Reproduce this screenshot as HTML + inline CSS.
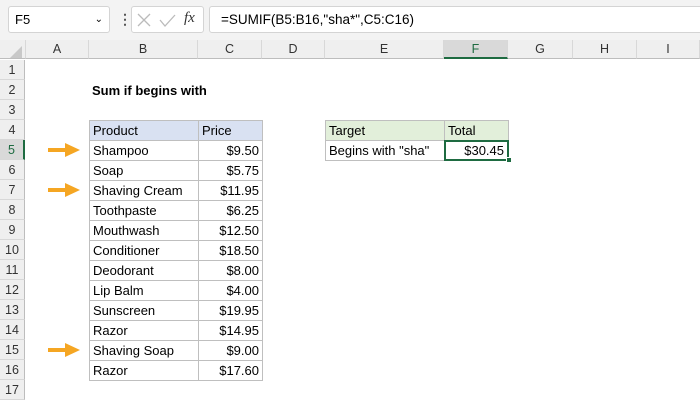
<!DOCTYPE html>
<html><head><style>
*{margin:0;padding:0;box-sizing:border-box}
body{width:700px;height:400px;overflow:hidden;background:#fff;font-family:"Liberation Sans",sans-serif;position:relative;color:#000}
.a{position:absolute}
.ch{position:absolute;top:40px;height:19px;background:#efefef;border-right:1px solid #d8d8d8;border-bottom:1px solid #bdbdbd;font-size:12.5px;color:#333;text-align:center;line-height:19px}
.rh{position:absolute;left:0;width:25px;height:20px;background:#efefef;border-bottom:1px solid #d8d8d8;border-right:1px solid #bdbdbd;font-size:12.5px;color:#333;text-align:center;line-height:20px}
.c{position:absolute;height:21px;border:1px solid #bfbfbf;font-size:13px;line-height:19px;padding:0 3px;white-space:nowrap}
.r{text-align:right}
.arr{position:absolute;left:48px;width:32px;height:16px}
</style></head><body>
<div class="a" style="left:0;top:0;width:700px;height:40px;background:#f3f3f3"></div>
<div class="a" style="left:8px;top:6px;width:102px;height:27px;background:#fff;border:1px solid #d4d4d4;border-radius:3px;font-size:13px;line-height:25px;padding-left:6px">F5<span style="position:absolute;right:6px;top:0;font-size:10px">&#8964;</span></div>
<div class="a" style="left:118px;top:12px;font-size:14px;line-height:14px;color:#555;font-weight:bold">&#8942;</div>
<div class="a" style="left:131px;top:6px;width:73px;height:27px;background:#fff;border:1px solid #d4d4d4;border-radius:3px">
<svg width="73" height="27" style="position:absolute;left:0;top:0"><path d="M6 7l12 12M18 7L6 19" stroke="#bbb" stroke-width="1.3" fill="none"/><path d="M28 13l5 6 10-11" stroke="#bbb" stroke-width="1.3" fill="none"/></svg>
<span style="position:absolute;left:52px;top:3px;font-family:'Liberation Serif',serif;font-style:italic;font-size:15px;color:#333">fx</span></div>
<div class="a" style="left:209px;top:6px;width:495px;height:27px;background:#fff;border:1px solid #d4d4d4;border-radius:3px;font-size:13.5px;line-height:25px;padding-left:11px">=SUMIF(B5:B16,"sha*",C5:C16)</div>

<div class="ch" style="left:0;width:26px"></div>
<svg class="a" style="left:8px;top:46px" width="14" height="12"><path d="M14 0V12H2Z" fill="#c8c8c8"/></svg>
<div class="ch" style="left:26px;width:63px">A</div>
<div class="ch" style="left:89px;width:109px">B</div>
<div class="ch" style="left:198px;width:64px">C</div>
<div class="ch" style="left:262px;width:63px">D</div>
<div class="ch" style="left:325px;width:119px">E</div>
<div class="ch" style="left:444px;width:64px;background:#d9d9d9;color:#1e6b41;border-bottom:2px solid #1e6b41">F</div>
<div class="ch" style="left:508px;width:65px">G</div>
<div class="ch" style="left:573px;width:64px">H</div>
<div class="ch" style="left:637px;width:63px">I</div>

<div class="rh" style="top:60px">1</div>
<div class="rh" style="top:80px">2</div>
<div class="rh" style="top:100px">3</div>
<div class="rh" style="top:120px">4</div>
<div class="rh" style="top:140px;background:#d9d9d9;color:#1e6b41;border-right:2px solid #1e6b41">5</div>
<div class="rh" style="top:160px">6</div>
<div class="rh" style="top:180px">7</div>
<div class="rh" style="top:200px">8</div>
<div class="rh" style="top:220px">9</div>
<div class="rh" style="top:240px">10</div>
<div class="rh" style="top:260px">11</div>
<div class="rh" style="top:280px">12</div>
<div class="rh" style="top:300px">13</div>
<div class="rh" style="top:320px">14</div>
<div class="rh" style="top:340px">15</div>
<div class="rh" style="top:360px">16</div>
<div class="rh" style="top:380px">17</div>

<div class="a" style="left:92px;top:82px;font-size:13px;font-weight:bold;line-height:18px">Sum if begins with</div>

<div class="c" style="left:89px;top:120px;width:110px;background:#d9e1f2">Product</div>
<div class="c r" style="left:198px;top:120px;width:65px;background:#d9e1f2;text-align:left">Price</div>
<div class="c" style="left:89px;top:140px;width:110px">Shampoo</div><div class="c r" style="left:198px;top:140px;width:65px">$9.50</div>
<div class="c" style="left:89px;top:160px;width:110px">Soap</div><div class="c r" style="left:198px;top:160px;width:65px">$5.75</div>
<div class="c" style="left:89px;top:180px;width:110px">Shaving Cream</div><div class="c r" style="left:198px;top:180px;width:65px">$11.95</div>
<div class="c" style="left:89px;top:200px;width:110px">Toothpaste</div><div class="c r" style="left:198px;top:200px;width:65px">$6.25</div>
<div class="c" style="left:89px;top:220px;width:110px">Mouthwash</div><div class="c r" style="left:198px;top:220px;width:65px">$12.50</div>
<div class="c" style="left:89px;top:240px;width:110px">Conditioner</div><div class="c r" style="left:198px;top:240px;width:65px">$18.50</div>
<div class="c" style="left:89px;top:260px;width:110px">Deodorant</div><div class="c r" style="left:198px;top:260px;width:65px">$8.00</div>
<div class="c" style="left:89px;top:280px;width:110px">Lip Balm</div><div class="c r" style="left:198px;top:280px;width:65px">$4.00</div>
<div class="c" style="left:89px;top:300px;width:110px">Sunscreen</div><div class="c r" style="left:198px;top:300px;width:65px">$19.95</div>
<div class="c" style="left:89px;top:320px;width:110px">Razor</div><div class="c r" style="left:198px;top:320px;width:65px">$14.95</div>
<div class="c" style="left:89px;top:340px;width:110px">Shaving Soap</div><div class="c r" style="left:198px;top:340px;width:65px">$9.00</div>
<div class="c" style="left:89px;top:360px;width:110px">Razor</div><div class="c r" style="left:198px;top:360px;width:65px">$17.60</div>

<div class="c" style="left:325px;top:120px;width:120px;background:#e2efda">Target</div>
<div class="c" style="left:444px;top:120px;width:65px;background:#e2efda">Total</div>
<div class="c" style="left:325px;top:140px;width:120px">Begins with "sha"</div>
<div class="c r" style="left:444px;top:140px;width:65px;border:2px solid #1e6b41;line-height:17px">$30.45</div>
<div class="a" style="left:506px;top:157px;width:6px;height:6px;background:#1e6b41;border:1px solid #fff"></div>

<svg class="arr" style="top:142px" viewBox="0 0 32 16"><path d="M0 8H20" stroke="#f5a623" stroke-width="4"/><path d="M17 1L32 8L17 15Z" fill="#f5a623"/></svg>
<svg class="arr" style="top:182px" viewBox="0 0 32 16"><path d="M0 8H20" stroke="#f5a623" stroke-width="4"/><path d="M17 1L32 8L17 15Z" fill="#f5a623"/></svg>
<svg class="arr" style="top:342px" viewBox="0 0 32 16"><path d="M0 8H20" stroke="#f5a623" stroke-width="4"/><path d="M17 1L32 8L17 15Z" fill="#f5a623"/></svg>
</body></html>
